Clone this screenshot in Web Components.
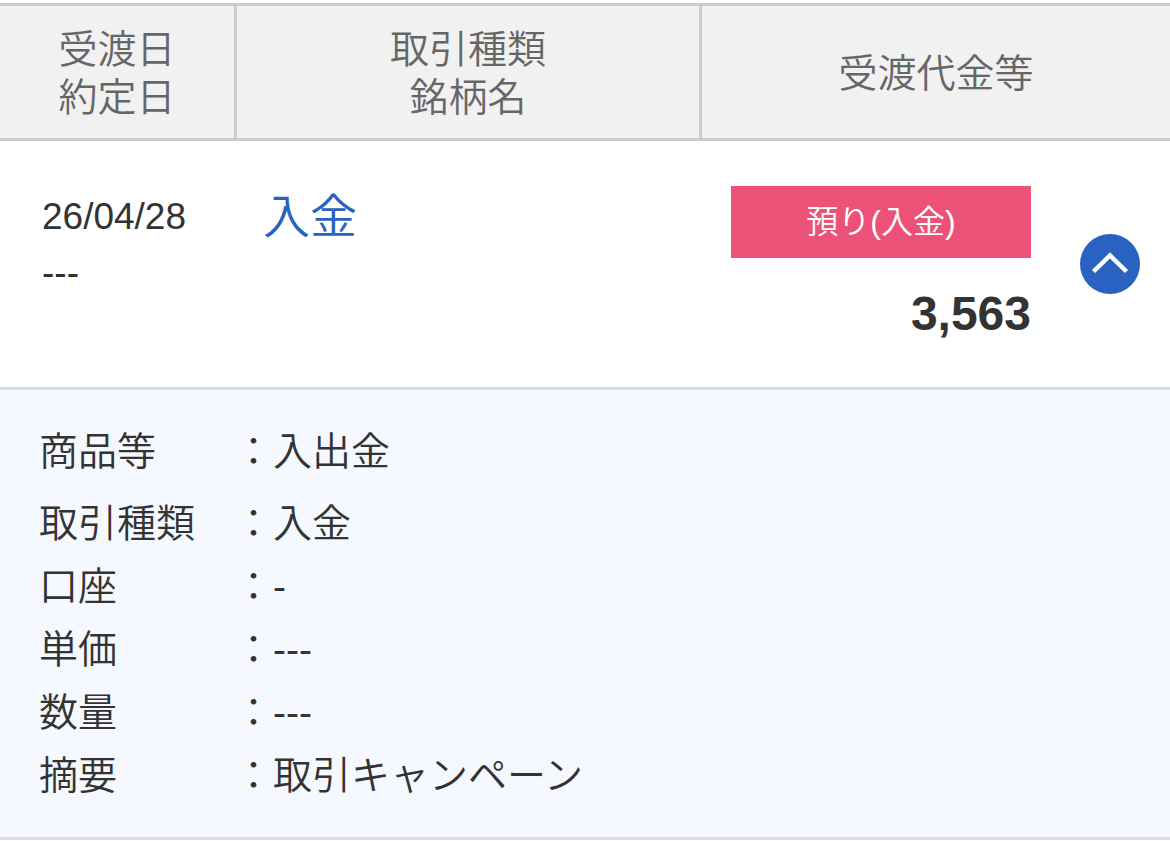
<!DOCTYPE html>
<html lang="ja">
<head>
<meta charset="UTF-8">
<meta name="viewport" content="width=device-width, initial-scale=1">
<title>入出金明細</title>
<style>
  body {
    margin: 0;
    padding-top: 3px;
    background: #fff;
    color: #333;
    font-family: "Liberation Sans", "Noto Sans CJK JP", sans-serif;
    font-size: 39px;
    font-weight: 350;
  }
</style>
</head>
<body>
<trade-history>
  <span slot="date-head">受渡日<br>約定日</span>
  <span slot="type-head">取引種類<br>銘柄名</span>
  <span slot="amount-head">受渡代金等</span>

  <span slot="date">26/04/28<br>---</span>
  <trade-link slot="type" href="#details">入金</trade-link>
  <trade-amount slot="amount" label="預り(入金)">3,563</trade-amount>

  <detail-list slot="details" id="details">
    <detail-row class="lead" label="商品等">入出金</detail-row>
    <detail-row label="取引種類">入金</detail-row>
    <detail-row label="口座">-</detail-row>
    <detail-row label="単価">---</detail-row>
    <detail-row label="数量">---</detail-row>
    <detail-row label="摘要">取引キャンペーン</detail-row>
  </detail-list>
</trade-history>

<script>
class TradeHistory extends HTMLElement {
  constructor() {
    super();
    this.attachShadow({ mode: 'open' });
  }

  connectedCallback() {
    this.shadowRoot.innerHTML = `
      <style>
        :host {
          display: block;
        }
        table {
          width: 100%;
          table-layout: fixed;
          border-collapse: separate;
          border-spacing: 0;
        }
        .date { width: 20%; }
        .type { width: 40%; }
        th {
          box-sizing: border-box;
          padding: 20px 0 16px;
          background: #f1f1f1;
          border-top: 3px solid #ccc;
          border-bottom: 3px solid #ccc;
          color: #666;
          font-weight: inherit;
          line-height: 48px;
          text-align: center;
        }
        th.type {
          border-left: 3px solid #ccc;
          border-right: 3px solid #ccc;
        }
        td {
          padding: 45px 30px 45px 29px;
          border-bottom: 3px solid #d9dbe0;
          vertical-align: top;
        }
        td.date {
          padding: 48px 0 45px 42px;
          font-size: 37px;
          line-height: 56px;
        }
        .amount {
          display: flex;
          align-items: center;
          gap: 49px;
        }
        .amount slot {
          display: block;
          flex: 1;
        }
        td.details {
          padding: 30px 39px;
          background: #f5f8fe;
          border-bottom-color: #ddd;
        }
      </style>
      <table>
        <thead>
          <tr>
            <th class="date" scope="col"><slot name="date-head"></slot></th>
            <th class="type" scope="col"><slot name="type-head"></slot></th>
            <th scope="col"><slot name="amount-head"></slot></th>
          </tr>
        </thead>
        <tbody>
          <tr>
            <td class="date"><slot name="date"></slot></td>
            <td><slot name="type"></slot></td>
            <td>
              <div class="amount">
                <slot name="amount"></slot>
                <toggle-button></toggle-button>
              </div>
            </td>
          </tr>
          <tr class="details-row">
            <td class="details" colspan="3"><slot name="details"></slot></td>
          </tr>
        </tbody>
      </table>
    `;

    const detailsRow = this.shadowRoot.querySelector('.details-row');
    this.shadowRoot.addEventListener('toggle-details', (e) => {
      detailsRow.hidden = !e.detail.open;
    });
  }
}

class TradeLink extends HTMLElement {
  constructor() {
    super();
    this.attachShadow({ mode: 'open' });
  }

  connectedCallback() {
    this.shadowRoot.innerHTML = `
      <style>
        :host {
          display: block;
          font-size: 47px;
          line-height: 62px;
        }
        a {
          color: #2962c0;
          text-decoration: none;
        }
      </style>
      <a href="${this.getAttribute('href')}"><slot></slot></a>
    `;
  }
}

class TradeAmount extends HTMLElement {
  constructor() {
    super();
    this.attachShadow({ mode: 'open' });
  }

  connectedCallback() {
    this.shadowRoot.innerHTML = `
      <style>
        :host {
          display: flex;
          flex-direction: column;
          gap: 28px;
        }
        .label {
          background: #ec5277;
          color: #fff;
          font-size: 32px;
          line-height: 72px;
          text-align: center;
        }
        .value {
          font-size: 48px;
          font-weight: bold;
          line-height: 56px;
          text-align: right;
        }
      </style>
      <div class="label">${this.getAttribute('label')}</div>
      <div class="value"><slot></slot></div>
    `;
  }
}

class ToggleButton extends HTMLElement {
  constructor() {
    super();
    this.attachShadow({ mode: 'open' });
  }

  connectedCallback() {
    this.shadowRoot.innerHTML = `
      <style>
        :host {
          display: block;
          flex: none;
        }
        button {
          display: block;
          padding: 0;
          border: 0;
          border-radius: 50%;
          background: #2962c0;
          cursor: pointer;
        }
        svg {
          display: block;
        }
        button[aria-expanded="false"] svg {
          transform: rotate(180deg);
        }
      </style>
      <button type="button" aria-expanded="true" aria-label="詳細">
        <svg width="60" height="60" viewBox="0 0 60 60" fill="none" stroke="#fff" stroke-width="4.5" aria-hidden="true">
          <path d="M13.500 37.500 30 21.500l16.500 16"/>
        </svg>
      </button>
    `;

    const button = this.shadowRoot.querySelector('button');
    button.addEventListener('click', () => {
      const open = button.getAttribute('aria-expanded') !== 'true';
      button.setAttribute('aria-expanded', open);
      this.dispatchEvent(new CustomEvent('toggle-details', { bubbles: true, detail: { open } }));
    });
  }
}

class DetailList extends HTMLElement {
  constructor() {
    super();
    this.attachShadow({ mode: 'open' });
  }

  connectedCallback() {
    this.shadowRoot.innerHTML = `
      <style>
        :host {
          display: block;
          line-height: 63px;
        }
        ::slotted(.lead) {
          margin-bottom: 9px;
        }
      </style>
      <slot></slot>
    `;
  }
}

class DetailRow extends HTMLElement {
  constructor() {
    super();
    this.attachShadow({ mode: 'open' });
  }

  connectedCallback() {
    this.shadowRoot.innerHTML = `
      <style>
        :host {
          display: block;
        }
        dl {
          display: grid;
          grid-template-columns: 195px 1fr;
          margin: 0;
        }
        dd {
          margin: 0;
        }
      </style>
      <dl>
        <dt>${this.getAttribute('label')}</dt>
        <dd>：<slot></slot></dd>
      </dl>
    `;
  }
}

customElements.define('trade-history', TradeHistory);
customElements.define('trade-link', TradeLink);
customElements.define('trade-amount', TradeAmount);
customElements.define('toggle-button', ToggleButton);
customElements.define('detail-list', DetailList);
customElements.define('detail-row', DetailRow);
</script>
</body>
</html>
